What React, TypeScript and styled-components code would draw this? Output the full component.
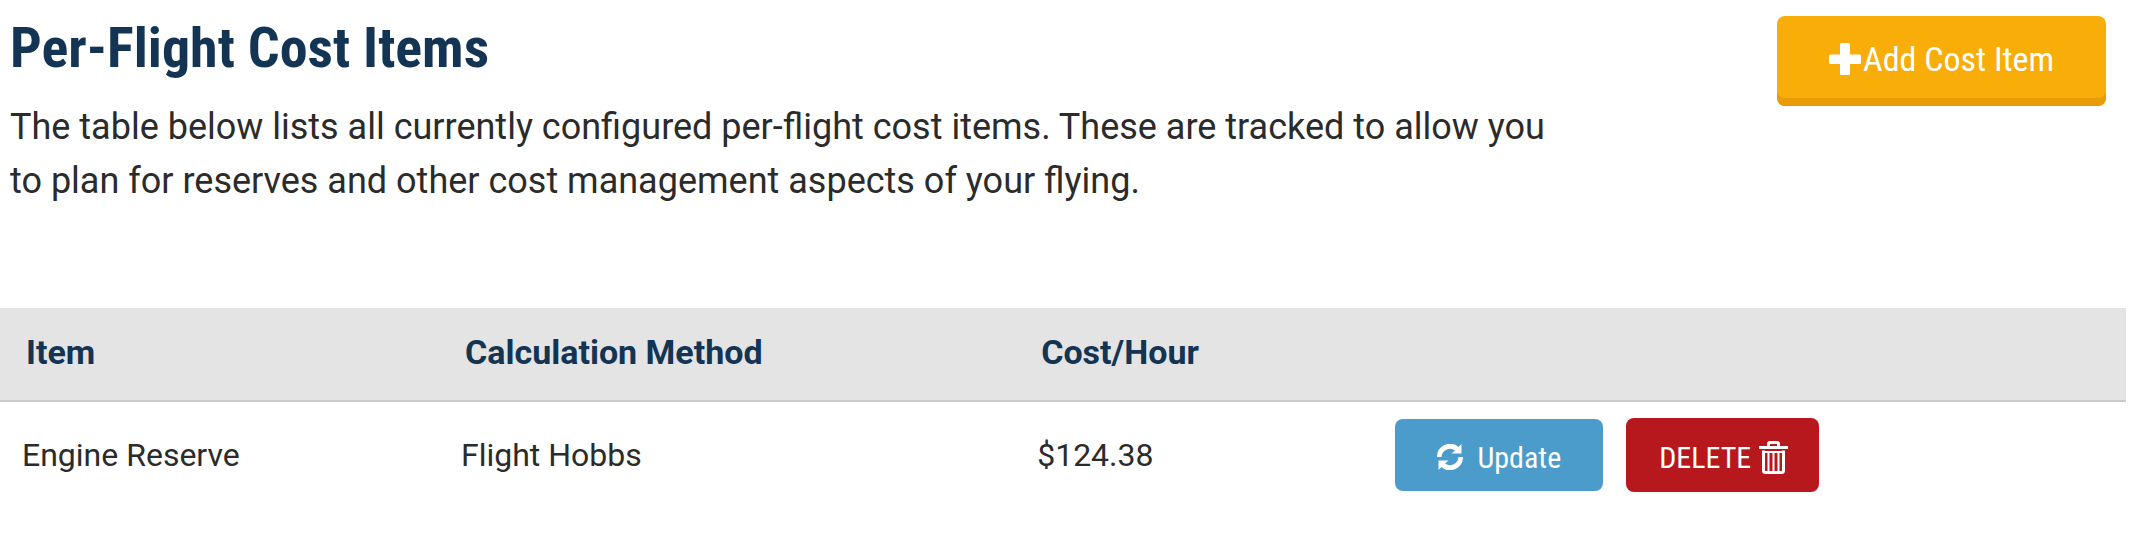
import React from 'react';
import styled, { createGlobalStyle } from 'styled-components';

const navy = '#133453';

const GlobalStyle = createGlobalStyle`
  * { box-sizing: border-box; }
  body {
    margin: 0;
    background: #fff;
    color: #2b2b2b;
    font-family: Roboto, sans-serif;
  }
`;

const Page = styled.main`
  padding-right: 3px;
`;

const Header = styled.header`
  display: flex;
  justify-content: space-between;
  align-items: flex-start;
  padding: 16px 20px 0 10px;
`;

const Intro = styled.div`
  flex: 0 1 75%;
`;

const Title = styled.h1`
  margin: 0 0 20px;
  color: ${navy};
  font: bold 56px/64px 'Roboto Condensed', Roboto, sans-serif;
`;

const Description = styled.p`
  margin: 0;
  font-size: 36px;
  line-height: 54px;
`;

const Button = styled.button`
  display: inline-flex;
  align-items: center;
  border: 0;
  border-radius: 8px;
  color: #fff;
  font-family: 'Roboto Condensed', Roboto, sans-serif;
  white-space: nowrap;
  cursor: pointer;
`;

const AddButton = styled(Button)`
  gap: 2px;
  height: 90px;
  padding: 0 52px 4px;
  background: #f8ad08;
  box-shadow: inset 0 -8px 0 #e99c07;
  font-size: 34px;
`;

const UpdateButton = styled(Button)`
  gap: 14px;
  height: 72px;
  padding: 4px 42px 0;
  background: #4b9bcb;
  font-size: 30px;
`;

const DeleteButton = styled(Button)`
  gap: 8px;
  height: 74px;
  padding: 4px 31px 0 33px;
  background: #b7181d;
  font-size: 30px;
`;

const Table = styled.table`
  width: 100%;
  margin-top: 100px;
  border-spacing: 0;
  table-layout: fixed;
  text-align: left;
`;

const Column = styled.col<{ $share?: number }>`
  width: ${({ $share }) => ($share ? `${$share}%` : 'auto')};
`;

const HeadCell = styled.th`
  height: 94px;
  padding: 0 26px 4px;
  border-bottom: 2px solid #cacaca;
  background: #e4e4e4;
  color: ${navy};
  font-size: 34px;
  font-weight: bold;
`;

const Cell = styled.td`
  height: 106px;
  padding: 0 22px;
  font-size: 32px;
`;

const Actions = styled.div`
  display: flex;
  align-items: center;
  gap: 23px;
`;

const PlusIcon = () => (
  <svg width="32" height="32" viewBox="0 0 32 32" fill="currentColor" aria-hidden="true">
    <path d="M12.500 0h7q1.500 0 1.500 1.500v10h9.500q1.500 0 1.500 1.500v6.500q0 1.500-1.500 1.500H21v9.500q0 1.500-1.500 1.500h-7q-1.500 0-1.500-1.500V21H1.500Q0 21 0 19.500V13q0-1.500 1.500-1.500H11v-10Q11 0 12.500 0z" />
  </svg>
);

const RefreshIcon = () => (
  <svg width="26" height="26" viewBox="0 0 26 26" fill="currentColor" aria-hidden="true">
    <path d="M0 13A13 13 0 0 1 21.500 3L24.500 0V9.500H14.500L18 6.500A8.500 8.500 0 0 0 4.500 13Z" />
    <path d="M26 13A13 13 0 0 1 4.500 23L1.500 26V16.500H11.500L8 19.500A8.500 8.500 0 0 0 21.500 13Z" />
  </svg>
);

const TrashIcon = () => (
  <svg width="29" height="33" viewBox="0 0 29 33" fill="none" stroke="currentColor" aria-hidden="true">
    <path strokeWidth="3" d="M0 6.500H29M9.500 6V3q0-1.500 1.500-1.500h7q1.500 0 1.500 1.500V6" />
    <path strokeWidth="3" d="M4.500 9.500V29.500q0 2 2 2h16q2 0 2-2V9.500" />
    <path strokeWidth="2" d="M3 11H26M9.500 11V30M14.500 11V30M19.500 11V30" />
  </svg>
);

export default function App() {
  return (
    <Page>
      <GlobalStyle />
      <Header>
        <Intro>
          <Title>Per-Flight Cost Items</Title>
          <Description>
            The table below lists all currently configured per-flight cost items. These are tracked to allow you
            to plan for reserves and other cost management aspects of your flying.
          </Description>
        </Intro>
        <AddButton type="button"><PlusIcon />Add Cost Item</AddButton>
      </Header>
      <Table>
        <colgroup>
          <Column $share={20.65} />
          <Column $share={27.1} />
          <Column $share={16.85} />
          <Column />
        </colgroup>
        <thead>
          <tr>
            <HeadCell scope="col">Item</HeadCell>
            <HeadCell scope="col">Calculation Method</HeadCell>
            <HeadCell scope="col">Cost/Hour</HeadCell>
            <HeadCell scope="col" aria-label="Actions" />
          </tr>
        </thead>
        <tbody>
          <tr>
            <Cell>Engine Reserve</Cell>
            <Cell>Flight Hobbs</Cell>
            <Cell>$124.38</Cell>
            <Cell>
              <Actions>
                <UpdateButton type="button"><RefreshIcon />Update</UpdateButton>
                <DeleteButton type="button">DELETE<TrashIcon /></DeleteButton>
              </Actions>
            </Cell>
          </tr>
        </tbody>
      </Table>
    </Page>
  );
}
